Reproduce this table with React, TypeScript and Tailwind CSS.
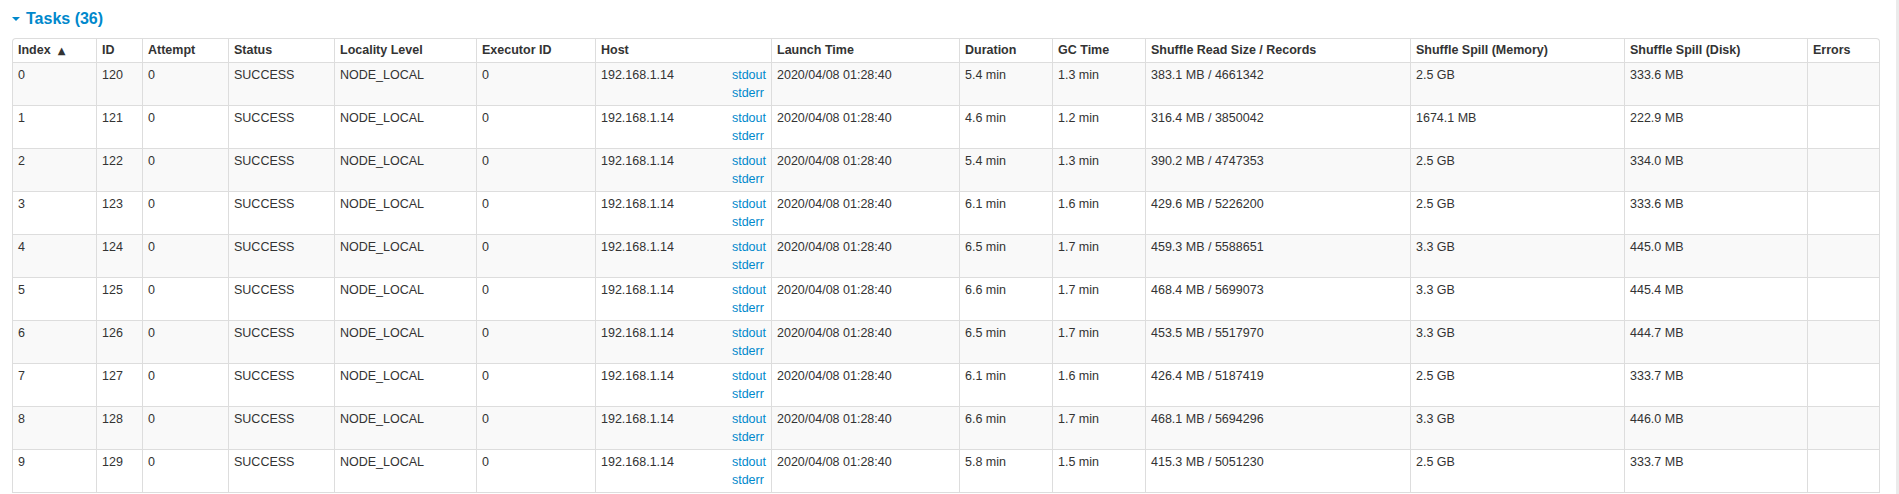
import React from "react";

type Row = {
  index: number;
  id: number;
  duration: string;
  gc: string;
  read: string;
  mem: string;
  disk: string;
};

const rows: Row[] = [
  { index: 0, id: 120, duration: "5.4 min", gc: "1.3 min", read: "383.1 MB / 4661342", mem: "2.5 GB", disk: "333.6 MB" },
  { index: 1, id: 121, duration: "4.6 min", gc: "1.2 min", read: "316.4 MB / 3850042", mem: "1674.1 MB", disk: "222.9 MB" },
  { index: 2, id: 122, duration: "5.4 min", gc: "1.3 min", read: "390.2 MB / 4747353", mem: "2.5 GB", disk: "334.0 MB" },
  { index: 3, id: 123, duration: "6.1 min", gc: "1.6 min", read: "429.6 MB / 5226200", mem: "2.5 GB", disk: "333.6 MB" },
  { index: 4, id: 124, duration: "6.5 min", gc: "1.7 min", read: "459.3 MB / 5588651", mem: "3.3 GB", disk: "445.0 MB" },
  { index: 5, id: 125, duration: "6.6 min", gc: "1.7 min", read: "468.4 MB / 5699073", mem: "3.3 GB", disk: "445.4 MB" },
  { index: 6, id: 126, duration: "6.5 min", gc: "1.7 min", read: "453.5 MB / 5517970", mem: "3.3 GB", disk: "444.7 MB" },
  { index: 7, id: 127, duration: "6.1 min", gc: "1.6 min", read: "426.4 MB / 5187419", mem: "2.5 GB", disk: "333.7 MB" },
  { index: 8, id: 128, duration: "6.6 min", gc: "1.7 min", read: "468.1 MB / 5694296", mem: "3.3 GB", disk: "446.0 MB" },
  { index: 9, id: 129, duration: "5.8 min", gc: "1.5 min", read: "415.3 MB / 5051230", mem: "2.5 GB", disk: "333.7 MB" },
];

const GRID =
  "grid grid-cols-[84px_46px_86px_106px_142px_119px_176px_188px_93px_93px_265px_214px_183px_71px]";

const headers = [
  "Index",
  "ID",
  "Attempt",
  "Status",
  "Locality Level",
  "Executor ID",
  "Host",
  "Launch Time",
  "Duration",
  "GC Time",
  "Shuffle Read Size / Records",
  "Shuffle Spill (Memory)",
  "Shuffle Spill (Disk)",
  "Errors",
];

function HeadCell({ label, last }: { label: string; last: boolean }) {
  return (
    <div
      className={
        "flex h-[24px] items-center whitespace-nowrap border-b border-[#dddddd] px-[5px] font-bold " +
        (last ? "" : "border-r")
      }
    >
      {label}
      {label === "Index" && (
        <span className="ml-[7px] font-['DejaVu_Sans',sans-serif] text-[10px] leading-none">▲</span>
      )}
    </div>
  );
}

function Cell({ children, last }: { children?: React.ReactNode; last?: boolean }) {
  return (
    <div
      className={
        "border-b border-[#dddddd] px-[5px] pt-[3px] leading-[18px] whitespace-nowrap " +
        (last ? "" : "border-r")
      }
    >
      {children}
    </div>
  );
}

export default function App() {
  return (
    <div className="flex h-[494px] overflow-hidden bg-white text-[12.5px] text-[#333333] font-['Liberation_Sans',Arial,sans-serif]">
      <main className="flex-1 pl-[12px]">
        <div className="mt-[9px] flex h-[20px] items-center">
          <span className="mr-[6px] h-0 w-0 border-l-[4px] border-r-[4px] border-t-[4px] border-l-transparent border-r-transparent border-t-[#0088cc]" />
          <span className="text-[16px] font-bold text-[#0088cc]">Tasks (36)</span>
        </div>
        <div className="mt-[9px] w-fit overflow-hidden rounded-t-[4px] border-l border-r border-t border-[#dddddd]">
          <div className={GRID}>
            {headers.map((h, i) => (
              <HeadCell key={h} label={h} last={i === headers.length - 1} />
            ))}
          </div>
          {rows.map((r) => (
            <div
              key={r.index}
              className={GRID + " h-[43px] " + (r.index % 2 === 0 ? "bg-[#f9f9f9]" : "bg-white")}
            >
              <Cell>{r.index}</Cell>
              <Cell>{r.id}</Cell>
              <Cell>0</Cell>
              <Cell>SUCCESS</Cell>
              <Cell>NODE_LOCAL</Cell>
              <Cell>0</Cell>
              <Cell>
                <div className="flex justify-between">
                  <span>192.168.1.14</span>
                  <div className="flex flex-col text-[#0088cc]">
                    <a>stdout</a>
                    <a>stderr</a>
                  </div>
                </div>
              </Cell>
              <Cell>2020/04/08 01:28:40</Cell>
              <Cell>{r.duration}</Cell>
              <Cell>{r.gc}</Cell>
              <Cell>{r.read}</Cell>
              <Cell>{r.mem}</Cell>
              <Cell>{r.disk}</Cell>
              <Cell last />
            </div>
          ))}
        </div>
      </main>
      <div className="w-[3px] bg-[#ebebeb]" />
    </div>
  );
}
